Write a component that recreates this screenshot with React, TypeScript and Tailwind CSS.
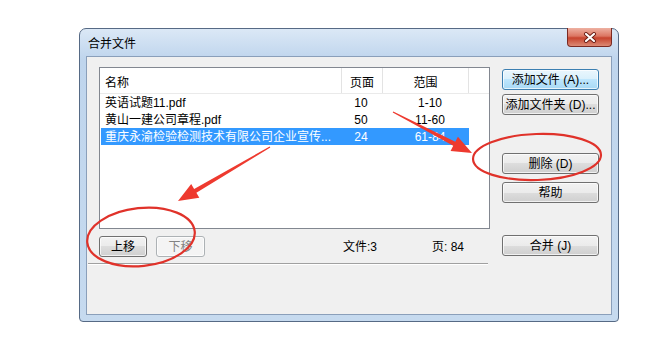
import type { ReactNode } from 'react';

interface FileRow {
    name: string;
    pages: string;
    range: string;
    selected?: boolean;
}

const FILES: FileRow[] = [
    { name: '英语试题11.pdf', pages: '10', range: '1-10' },
    { name: '黄山一建公司章程.pdf', pages: '50', range: '11-60' },
    { name: '重庆永渝检验检测技术有限公司企业宣传...', pages: '24', range: '61-84', selected: true },
];

type Variant = 'normal' | 'focus' | 'disabled';

function Btn({ children, variant = 'normal', className = '' }: { children: ReactNode; variant?: Variant; className?: string }) {
    const look =
        variant === 'focus'
            ? 'border-[#3c7fb1] bg-[linear-gradient(#eaf6fd_0%,#d9f0fc_50%,#bee6fd_50%,#a7d9f5_100%)] text-black'
            : variant === 'disabled'
              ? 'border-[#adb2b5] bg-[#f4f4f4] text-[#838383]'
              : 'border-[#707070] bg-[linear-gradient(#f2f2f2_0%,#ebebeb_50%,#dddddd_50%,#cfcfcf_100%)] text-black';
    return (
        <div
            className={`h-[21px] rounded-[3px] border flex items-center justify-center text-[12px] leading-[14px] shadow-[inset_0_0_0_1px_rgba(255,255,255,0.7)] ${look} ${className}`}
        >
            {children}
        </div>
    );
}

// tapered red arrow, like the hand-drawn annotation
function Arrow({ x1, y1, x2, y2 }: { x1: number; y1: number; x2: number; y2: number }) {
    const dx = x2 - x1;
    const dy = y2 - y1;
    const len = Math.hypot(dx, dy);
    const ux = dx / len;
    const uy = dy / len;
    const nx = -uy;
    const ny = ux;
    const head = 20;
    const hw = 8;
    const bx = x2 - ux * head;
    const by = y2 - uy * head;
    const pts = [
        [x1 + nx * 0.6, y1 + ny * 0.6],
        [bx + nx * 2.2, by + ny * 2.2],
        [bx + nx * hw, by + ny * hw],
        [x2, y2],
        [bx - nx * hw, by - ny * hw],
        [bx - nx * 2.2, by - ny * 2.2],
        [x1 - nx * 0.6, y1 - ny * 0.6],
    ];
    return <polygon points={pts.map((p) => p.join(',')).join(' ')} fill="#ee3a2f" />;
}

export default function App() {
    return (
        <div className="relative w-[653px] h-[358px] overflow-hidden bg-white pt-[28px] pl-[79px] font-['Liberation_Sans','Noto_Sans_CJK_SC',sans-serif]">
            {/* Window */}
            <div className="w-[540px] h-[294px] flex flex-col rounded-t-[7px] rounded-b-[4px] border border-[#566a85] bg-[linear-gradient(#dbe8f6,#bfd5ed_30px,#c6daef)] px-[6px] pb-[6px]">
                {/* Title bar */}
                <div className="h-[27px] flex items-start justify-between">
                    <span className="pl-[2px] pt-[8px] text-[12px] leading-[14px] text-black">合并文件</span>
                    <div className="-mt-[1px] w-[45px] h-[19px] rounded-b-[4px] border border-t-0 border-[#7b2a22] bg-[linear-gradient(#eeb1a2_0%,#dc7662_45%,#c7432d_55%,#dc8a75_100%)] flex items-center justify-center">
                        <svg width="14" height="11" viewBox="0 0 14 11">
                            <path d="M3 2 L11 9 M11 2 L3 9" stroke="#6b1d14" strokeWidth="4" strokeLinecap="round" />
                            <path d="M3 2 L11 9 M11 2 L3 9" stroke="#ffffff" strokeWidth="2.2" strokeLinecap="round" />
                        </svg>
                    </div>
                </div>

                {/* Client area */}
                <div className="flex-1 border border-[#8a9fba] bg-[#f0f0f0] pl-[12px] pt-[10px] text-[12px] leading-[14px] text-black">
                    <div className="flex">
                        {/* Left column */}
                        <div className="w-[391px]">
                            {/* List view */}
                            <div className="h-[162px] border border-[#828790] bg-white">
                                <div className="h-[26px] flex border-b border-[#eaeaea]">
                                    <div className="w-[242px] pl-[5px] pt-[8px] border-r border-[#e3e3e3]">名称</div>
                                    <div className="w-[41px] pt-[8px] text-center border-r border-[#e3e3e3]">页面</div>
                                    <div className="w-[86px] pt-[8px] text-center border-r border-[#e3e3e3]">范围</div>
                                </div>
                                {FILES.map((f) => (
                                    <div
                                        key={f.name}
                                        className={`ml-[1px] w-[368px] h-[17px] flex items-center ${f.selected ? 'bg-[#3399ff] text-white' : 'text-black'}`}
                                    >
                                        <div className="w-[241px] pl-[4px] whitespace-nowrap overflow-hidden">{f.name}</div>
                                        <div className="w-[41px] pr-[3px] text-center">{f.pages}</div>
                                        <div className="w-[86px] pl-[8px] text-center">{f.range}</div>
                                    </div>
                                ))}
                            </div>

                            {/* Bottom bar */}
                            <div className="mt-[7px] h-[21px] flex items-center">
                                <Btn className="w-[48px]">上移</Btn>
                                <Btn variant="disabled" className="ml-[9px] w-[49px]">下移</Btn>
                                <span className="ml-[138px] w-[89px]">文件:3</span>
                                <span>页: 84</span>
                            </div>
                            <div className="mt-[6px] -ml-[11px] w-[400px] h-[2px] border-t border-b border-t-[#a0a0a0] border-b-white" />
                        </div>

                        {/* Right column */}
                        <div className="ml-[12px] w-[97px] pt-[2px] flex flex-col">
                            <Btn variant="focus">添加文件 (A)...</Btn>
                            <Btn className="mt-[4px]">添加文件夹 (D)...</Btn>
                            <Btn className="mt-[38px]">删除 (D)</Btn>
                            <Btn className="mt-[8px]">帮助</Btn>
                            <Btn className="mt-[32px]">合并 (J)</Btn>
                        </div>
                    </div>
                </div>
            </div>

            {/* Red annotations */}
            <svg className="absolute left-0 top-0 pointer-events-none" width="653" height="358" viewBox="0 0 653 358">
                <ellipse cx="537" cy="157" rx="64" ry="23" transform="rotate(-2 537 157)" fill="none" stroke="#e0322a" strokeWidth="2.2" />
                <ellipse cx="141" cy="237" rx="54" ry="29" transform="rotate(-6 141 237)" fill="none" stroke="#e0322a" strokeWidth="2.2" />
                <Arrow x1={270} y1={147} x2={178} y2={201} />
                <Arrow x1={393} y1={112} x2={472} y2={153} />
            </svg>
        </div>
    );
}
